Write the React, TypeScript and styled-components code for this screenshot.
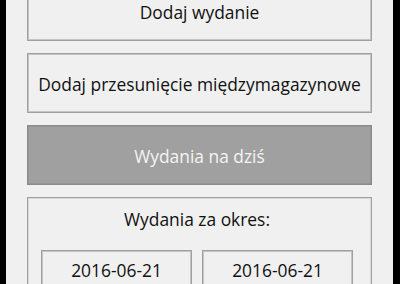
import React from "react";
import styled, { createGlobalStyle } from "styled-components";

const Global = createGlobalStyle`
  html, body { margin: 0; padding: 0; background: #000; }
  body { width: 400px; height: 284px; overflow: hidden; }
`;

const Frame = styled.div`
  width: 400px;
  height: 284px;
  display: flex;
  background: #000;
  overflow: hidden;
`;

const Panel = styled.div`
  margin-left: 6px;
  width: 387px;
  height: 284px;
  background: #f0f0f0;
  overflow: hidden;
  font-family: "Open Sans", "Liberation Sans", sans-serif;
`;

const Column = styled.div`
  margin-top: -19px;
  padding: 0 21px 0 21px;
  display: flex;
  flex-direction: column;
  gap: 12px;
`;

const Button = styled.div<{ $disabled?: boolean }>`
  box-sizing: border-box;
  height: 60px;
  display: flex;
  align-items: center;
  justify-content: center;
  border: 1px solid ${(p) => (p.$disabled ? "#8a8a8a" : "#a0a0a0")};
  box-shadow: inset 0 0 0 1px ${(p) => (p.$disabled ? "#959595" : "#c4c4c4")};
  background: ${(p) => (p.$disabled ? "#a0a0a0" : "#f0f0f0")};
  color: ${(p) => (p.$disabled ? "#f4f4f4" : "#111")};
  font-size: 17.4px;
  padding-top: 2px;
`;

const Group = styled.div`
  box-sizing: border-box;
  height: 120px;
  border: 1px solid #a0a0a0;
  box-shadow: inset 0 0 0 1px #d8d8d8;
  padding: 8px 18px 0 13px;
  display: flex;
  flex-direction: column;
`;

const GroupLabel = styled.div`
  text-align: center;
  font-size: 17.4px;
  color: #111;
  height: 26px;
  line-height: 26px;
`;

const DateRow = styled.div`
  margin-top: 18px;
  display: flex;
  gap: 10px;
`;

const DateBox = styled.div`
  box-sizing: border-box;
  flex: 1;
  height: 60px;
  border: 1px solid #a0a0a0;
  box-shadow: inset 0 0 0 1px #c4c4c4;
  display: flex;
  justify-content: center;
  padding-top: 7px;
  font-size: 17.4px;
  color: #111;
`;

export default function App() {
  return (
    <>
      <Global />
      <Frame>
        <Panel>
          <Column>
            <Button>Dodaj wydanie</Button>
            <Button>Dodaj przesunięcie międzymagazynowe</Button>
            <Button $disabled>Wydania na dziś</Button>
            <Group>
              <GroupLabel>Wydania za okres:</GroupLabel>
              <DateRow>
                <DateBox>2016-06-21</DateBox>
                <DateBox>2016-06-21</DateBox>
              </DateRow>
            </Group>
          </Column>
        </Panel>
      </Frame>
    </>
  );
}
